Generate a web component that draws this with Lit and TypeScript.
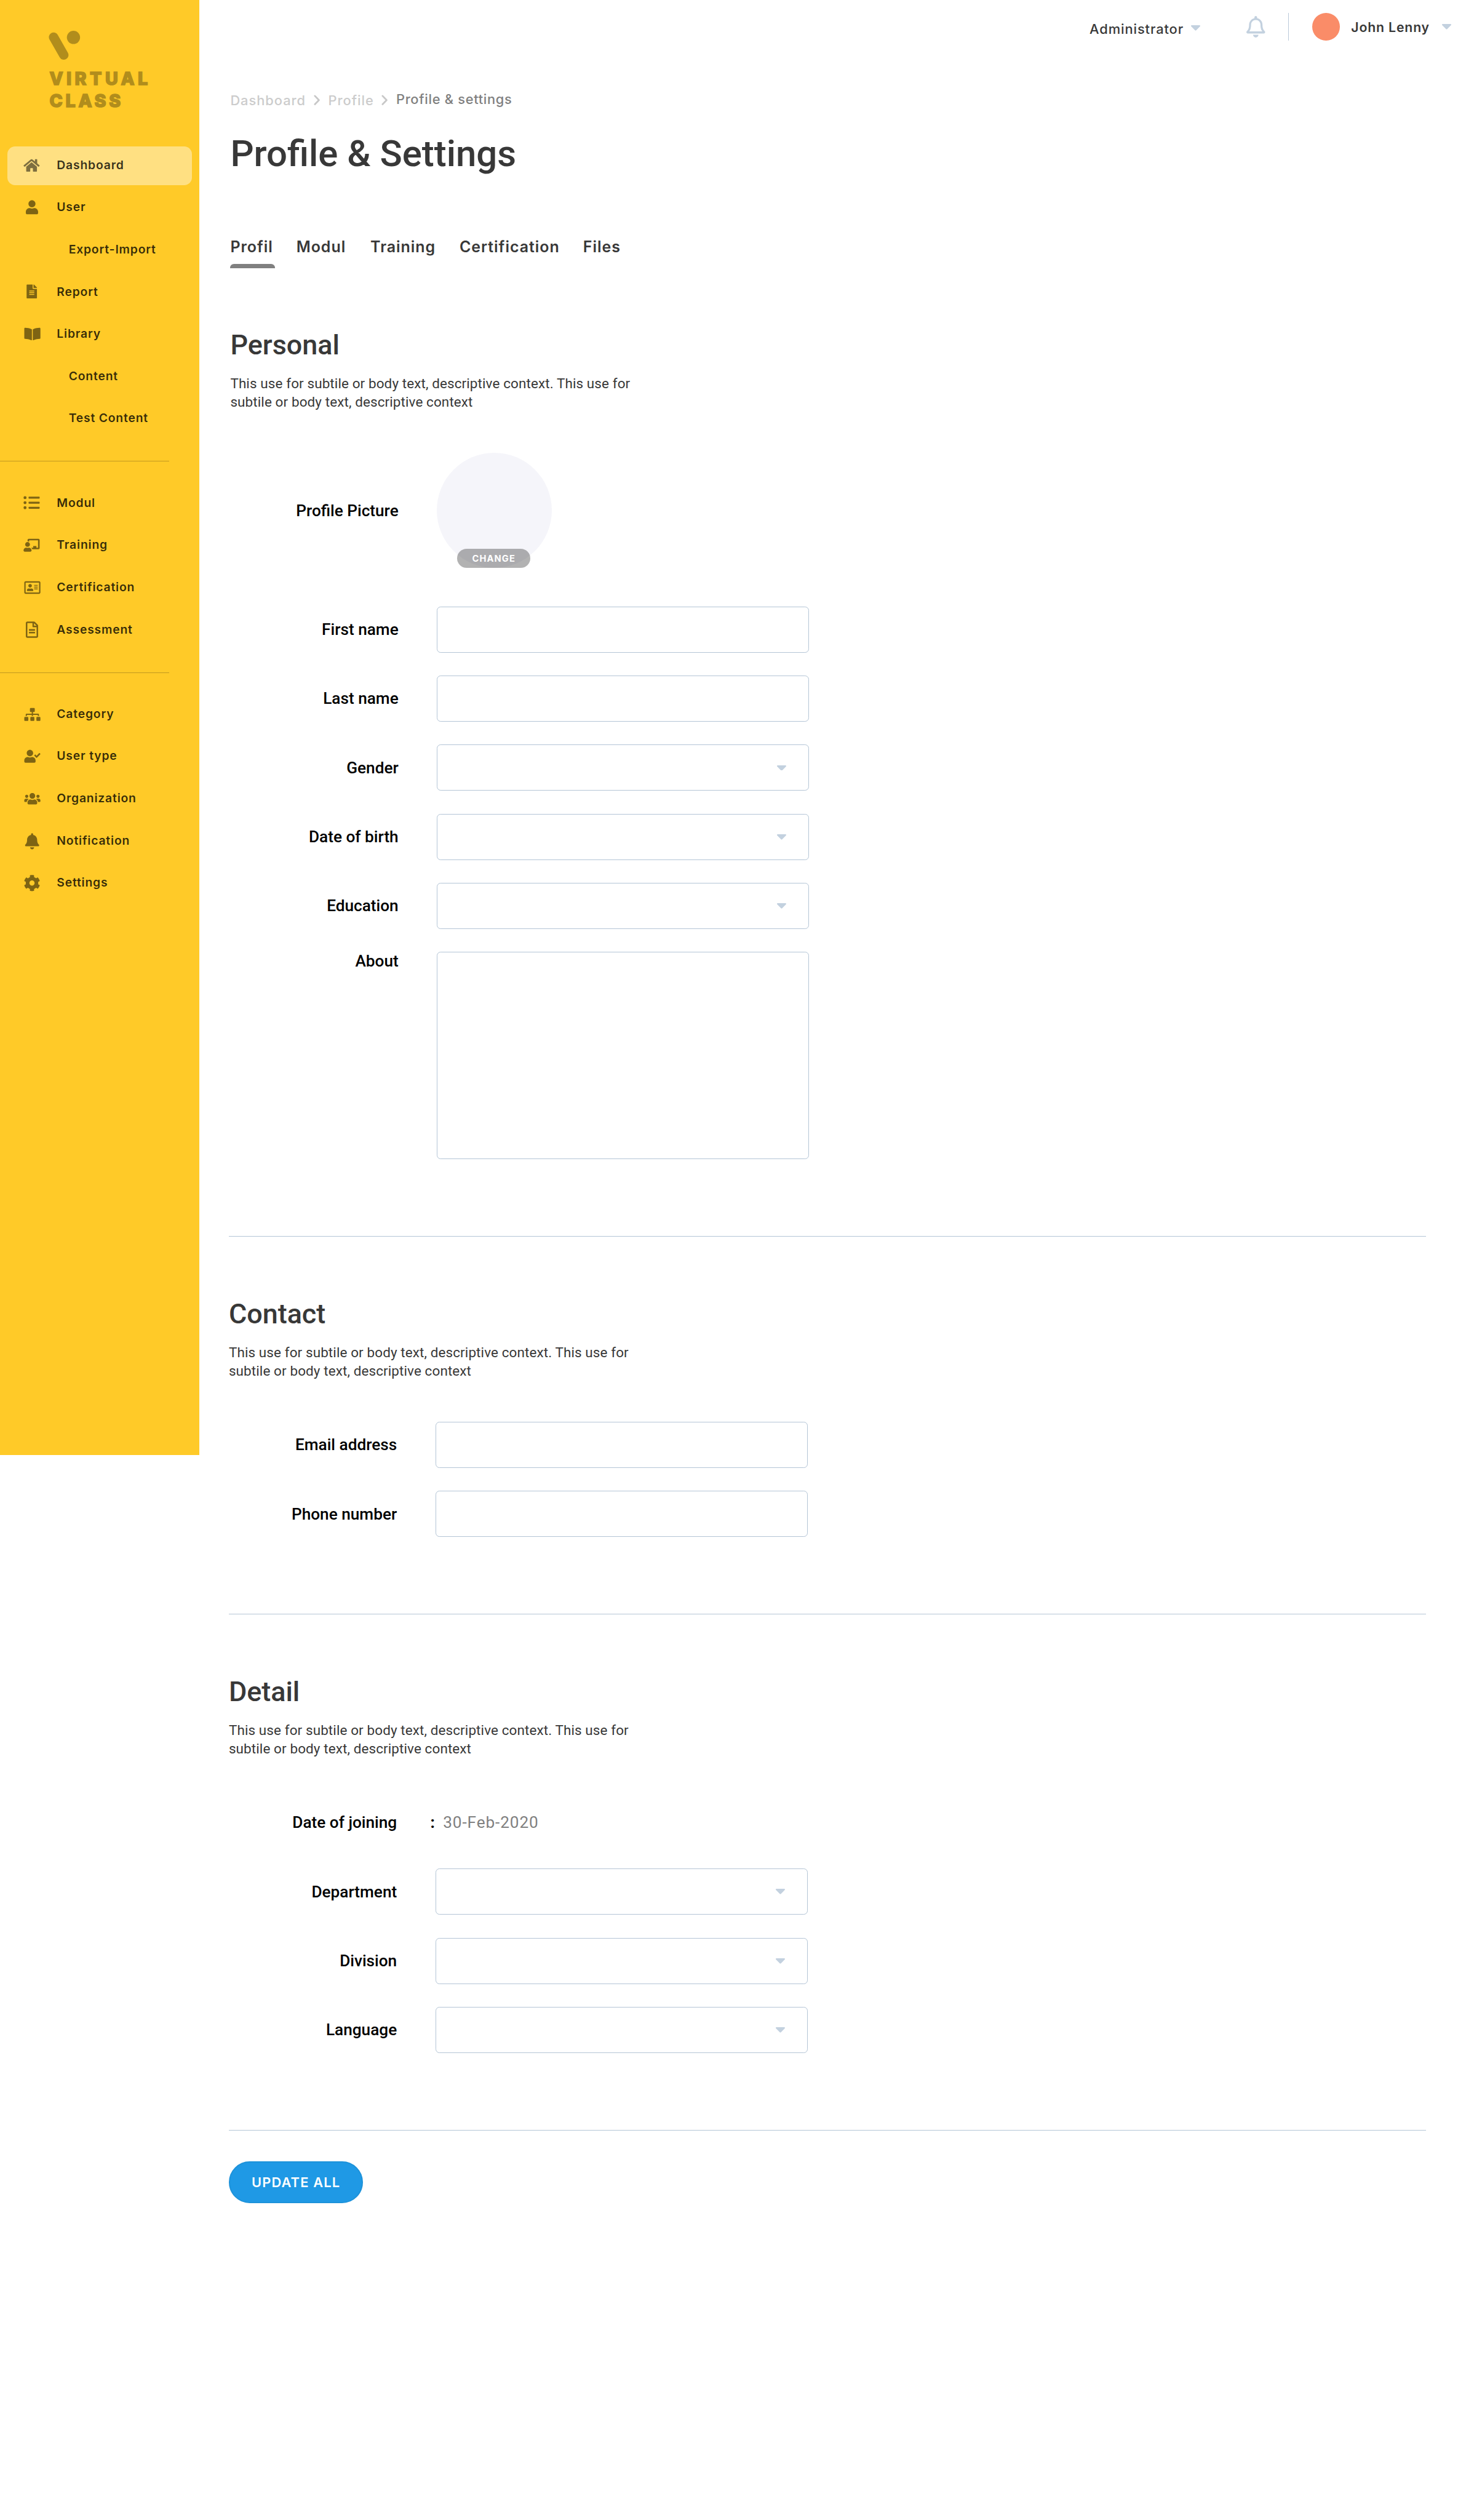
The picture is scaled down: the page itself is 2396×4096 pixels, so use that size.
import { LitElement, html, css, svg, unsafeCSS, nothing } from "lit";
import { customElement, property } from "lit/decorators.js";
import { classMap } from "lit/directives/class-map.js";

/** Converts a design-grid length (3840 units wide) to CSS pixels. */
const SCALE = 0.624;
const u = (n: number) => unsafeCSS(`${+(n * SCALE).toFixed(3)}px`);

interface Glyph {
  /** Source grid the path was drawn on. */
  scale: number;
  /** Offset inside the 48x48 icon slot. */
  x: number;
  y: number;
  d: string;
}

const ICONS: Record<string, Glyph> = {
  home: { scale: 42 / 576, x: 2, y: 3.6, d: "M280.37 148.26L96 300.11V464a16 16 0 0 0 16 16l112.06-.29a16 16 0 0 0 15.92-16V368a16 16 0 0 1 16-16h64a16 16 0 0 1 16 16v95.64a16 16 0 0 0 16 16.05L464 480a16 16 0 0 0 16-16V300L295.67 148.26a12.19 12.19 0 0 0-15.3 0zM571.6 251.47L488 182.56V44.05a12 12 0 0 0-12-12h-56a12 12 0 0 0-12 12v72.61L318.47 43a48 48 0 0 0-61 0L4.34 251.47a12 12 0 0 0-1.6 16.9l25.5 31A12 12 0 0 0 45.15 301l235.22-193.74a12.19 12.19 0 0 1 15.3 0L530.9 301a12 12 0 0 0 16.9-1.6l25.5-31a12 12 0 0 0-1.7-16.93z" },
  user: { scale: 32 / 448, x: 8, y: 4, d: "M224 256c70.7 0 128-57.3 128-128S294.7 0 224 0 96 57.3 96 128s57.3 128 128 128zm89.6 32h-16.7c-22.2 10.2-46.9 16-72.9 16s-50.6-5.8-72.9-16h-16.7C60.2 288 0 348.2 0 422.4V464c0 26.5 21.5 48 48 48h352c26.5 0 48-21.5 48-48v-41.6c0-74.2-60.2-134.4-134.4-134.4z" },
  report: { scale: 27 / 384, x: 10, y: 4, d: "M224 136V0H24C10.7 0 0 10.7 0 24v464c0 13.3 10.7 24 24 24h336c13.3 0 24-10.7 24-24V160H248c-13.2 0-24-10.8-24-24zm64 236c0 6.6-5.4 12-12 12H108c-6.6 0-12-5.4-12-12v-8c0-6.6 5.4-12 12-12h168c6.6 0 12 5.4 12 12v8zm0-64c0 6.6-5.4 12-12 12H108c-6.6 0-12-5.4-12-12v-8c0-6.6 5.4-12 12-12h168c6.6 0 12 5.4 12 12v8zm0-72v8c0 6.6-5.4 12-12 12H108c-6.6 0-12-5.4-12-12v-8c0-6.6 5.4-12 12-12h168c6.6 0 12 5.4 12 12zm96-114.1v6.1H256V0h6.1c6.4 0 12.5 2.5 17 7l97.9 98c4.5 4.5 7 10.6 7 16.9z" },
  library: { scale: 42 / 576, x: 4, y: 3.6, d: "M542.22 32.05c-54.8 3.11-163.72 14.43-230.96 55.59-4.64 2.84-7.27 7.89-7.27 13.17v363.87c0 11.55 12.63 18.85 23.28 13.49 69.18-34.82 169.23-44.32 218.7-46.92 16.89-.89 30.02-14.43 30.02-30.66V62.75c.01-17.71-15.35-31.74-33.77-30.7zM264.73 87.64C197.5 46.48 88.58 35.17 33.78 32.05 15.36 31.01 0 45.04 0 62.75V400.6c0 16.24 13.13 29.78 30.02 30.66 49.49 2.6 149.59 12.11 218.77 46.95 10.62 5.35 23.21-1.94 23.21-13.46V100.63c0-5.29-2.62-10.14-7.27-12.99z" },
  list: { scale: 42 / 512, x: 2, y: 0, d: "M48 48a48 48 0 1 0 48 48 48 48 0 0 0-48-48zm0 160a48 48 0 1 0 48 48 48 48 0 0 0-48-48zm0 160a48 48 0 1 0 48 48 48 48 0 0 0-48-48zm448 16H176a16 16 0 0 0-16 16v32a16 16 0 0 0 16 16h320a16 16 0 0 0 16-16v-32a16 16 0 0 0-16-16zm0-320H176a16 16 0 0 0-16 16v32a16 16 0 0 0 16 16h320a16 16 0 0 0 16-16V80a16 16 0 0 0-16-16zm0 160H176a16 16 0 0 0-16 16v32a16 16 0 0 0 16 16h320a16 16 0 0 0 16-16v-32a16 16 0 0 0-16-16z" },
  training: { scale: 42 / 640, x: 2, y: 6, d: "M208 352c-2.39 0-4.78.35-7.06 1.09C187.98 357.3 174.35 360 160 360c-14.35 0-27.98-2.7-40.95-6.91-2.28-.74-4.66-1.09-7.05-1.09C49.94 352-.33 402.48 0 464.62.14 490.88 21.73 512 48 512h224c26.27 0 47.86-21.12 48-47.38.33-62.14-49.94-112.62-112-112.62zm-48-32c53.02 0 96-42.98 96-96s-42.98-96-96-96-96 42.98-96 96 42.98 96 96 96zM592 0H208c-26.47 0-48 22.25-48 49.59V96c23.42 0 45.1 6.78 64 17.8V64h352v288h-64v-64H384v64h-76.24c19.1 16.69 33.12 38.73 39.69 64H592c26.47 0 48-22.25 48-49.59V49.59C640 22.25 618.47 0 592 0z" },
  card: { scale: 42 / 576, x: 4, y: 3.8, d: "M528 32H48C21.5 32 0 53.5 0 80v352c0 26.5 21.5 48 48 48h480c26.5 0 48-21.5 48-48V80c0-26.5-21.5-48-48-48zm0 400H48V80h480v352zM208 256c35.3 0 64-28.7 64-64s-28.7-64-64-64-64 28.7-64 64 28.7 64 64 64zm-89.6 128h179.2c12.4 0 22.4-8.6 22.4-19.2v-19.2c0-31.8-30.1-57.6-67.2-57.6-10.8 0-18.7 8-44.8 8-26.9 0-33.4-8-44.8-8-37.1 0-67.2 25.8-67.2 57.6v19.2c0 10.6 10 19.2 22.4 19.2zM360 320h112c4.4 0 8-3.6 8-8v-16c0-4.4-3.6-8-8-8H360c-4.4 0-8 3.6-8 8v16c0 4.4 3.6 8 8 8zm0-64h112c4.4 0 8-3.6 8-8v-16c0-4.4-3.6-8-8-8H360c-4.4 0-8 3.6-8 8v16c0 4.4 3.6 8 8 8zm0-64h112c4.4 0 8-3.6 8-8v-16c0-4.4-3.6-8-8-8H360c-4.4 0-8 3.6-8 8v16c0 4.4 3.6 8 8 8z" },
  assessment: { scale: 32 / 384, x: 8, y: 2, d: "M288 248v28c0 6.6-5.4 12-12 12H108c-6.6 0-12-5.4-12-12v-28c0-6.6 5.4-12 12-12h168c6.6 0 12 5.4 12 12zm-12 72H108c-6.6 0-12 5.4-12 12v28c0 6.6 5.4 12 12 12h168c6.6 0 12-5.4 12-12v-28c0-6.6-5.4-12-12-12zm108-188.1V464c0 26.5-21.5 48-48 48H48c-26.5 0-48-21.5-48-48V48C0 21.5 21.5 0 48 0h204.1C264.8 0 277 5.1 286 14.1L369.9 98c9 8.9 14.1 21.2 14.1 33.9zm-128-80V128h76.1L256 51.9zM336 464V176H232c-13.3 0-24-10.7-24-24V48H48v416h288z" },
  sitemap: { scale: 42 / 640, x: 4, y: 6, d: "M128 352H32c-17.67 0-32 14.33-32 32v96c0 17.67 14.33 32 32 32h96c17.67 0 32-14.33 32-32v-96c0-17.67-14.33-32-32-32zm-24-80h192v48h48v-48h192v48h48v-57.59c0-21.17-17.23-38.41-38.41-38.41H344v-64h40c17.67 0 32-14.33 32-32V32c0-17.67-14.33-32-32-32H256c-17.67 0-32 14.33-32 32v96c0 17.67 14.33 32 32 32h40v64H94.41C73.23 224 56 241.23 56 262.41V320h48v-48zm264 80h-96c-17.67 0-32 14.33-32 32v96c0 17.67 14.33 32 32 32h96c17.67 0 32-14.33 32-32v-96c0-17.67-14.33-32-32-32zm240 0h-96c-17.67 0-32 14.33-32 32v96c0 17.67 14.33 32 32 32h96c17.67 0 32-14.33 32-32v-96c0-17.67-14.33-32-32-32z" },
  usercheck: { scale: 42 / 640, x: 4, y: 6, d: "M224 256c70.7 0 128-57.3 128-128S294.7 0 224 0 96 57.3 96 128s57.3 128 128 128zm89.6 32h-16.7c-22.2 10.2-46.9 16-72.9 16s-50.6-5.8-72.9-16h-16.7C60.2 288 0 348.2 0 422.4V464c0 26.5 21.5 48 48 48h352c26.5 0 48-21.5 48-48v-41.6c0-74.2-60.2-134.4-134.4-134.4zm323-128.4l-27.8-28.1c-4.6-4.7-12.1-4.7-16.8-.1l-104.8 104-45.5-45.8c-4.6-4.7-12.1-4.7-16.8-.1l-28.1 27.9c-4.7 4.6-4.7 12.1-.1 16.8l81.7 82.3c4.6 4.7 12.1 4.7 16.8.1l141.3-140.2c4.6-4.7 4.7-12.2.1-16.8z" },
  users: { scale: 42 / 640, x: 4, y: 6, d: "M96 224c35.3 0 64-28.7 64-64s-28.7-64-64-64-64 28.7-64 64 28.7 64 64 64zm448 0c35.3 0 64-28.7 64-64s-28.7-64-64-64-64 28.7-64 64 28.7 64 64 64zm32 32h-64c-17.6 0-33.5 7.1-45.1 18.6 40.3 22.1 68.9 62 75.1 109.4h66c17.7 0 32-14.3 32-32v-32c0-35.3-28.7-64-64-64zm-256 0c61.9 0 112-50.1 112-112S381.9 32 320 32 208 82.1 208 144s50.1 112 112 112zm76.8 32h-8.3c-20.8 10-43.9 16-68.5 16s-47.6-6-68.5-16h-8.3C179.6 288 128 339.6 128 403.2V432c0 26.5 21.5 48 48 48h288c26.5 0 48-21.5 48-48v-28.8c0-63.6-51.6-115.2-115.2-115.2zm-223.7-13.4C161.5 263.1 145.6 256 128 256H64c-35.3 0-64 28.7-64 64v32c0 17.7 14.3 32 32 32h65.9c6.3-47.4 34.9-87.3 75.2-109.4z" },
  bell: { scale: 42 / 512, x: 6, y: 2, d: "M224 512c35.32 0 63.97-28.65 63.97-64H160.03c0 35.35 28.65 64 63.97 64zm215.39-149.71c-19.32-20.76-55.47-51.99-55.47-154.29 0-77.7-54.48-139.9-127.94-155.16V32c0-17.67-14.32-32-31.98-32s-31.98 14.33-31.98 32v20.84C118.56 68.1 64.08 130.3 64.08 208c0 102.3-36.15 133.53-55.47 154.29-6 6.45-8.66 14.16-8.61 21.71.11 16.4 12.98 32 32.1 32h383.8c19.12 0 32-15.6 32.1-32 .05-7.55-2.61-15.27-8.61-21.71z" },
  cog: { scale: 42 / 496, x: 2.4, y: 1.3, d: "M487.4 315.7l-42.6-24.6c4.3-23.2 4.3-47 0-70.2l42.6-24.6c4.9-2.8 7.1-8.6 5.5-14-11.1-35.6-30-67.8-54.7-94.6-3.8-4.1-10-5.1-14.8-2.3L380.8 110c-17.9-15.4-38.5-27.3-60.8-35.1V25.8c0-5.6-3.9-10.5-9.4-11.7-36.7-8.2-74.3-7.8-109.2 0-5.5 1.2-9.4 6.1-9.4 11.7V75c-22.2 7.9-42.8 19.8-60.8 35.1L88.7 85.5c-4.9-2.8-11-1.9-14.8 2.3-24.7 26.7-43.6 58.9-54.7 94.6-1.7 5.4.6 11.2 5.5 14L67.3 221c-4.3 23.2-4.3 47 0 70.2l-42.6 24.6c-4.9 2.8-7.1 8.6-5.5 14 11.1 35.6 30 67.8 54.7 94.6 3.8 4.1 10 5.1 14.8 2.3l42.6-24.6c17.9 15.4 38.5 27.3 60.8 35.1v49.2c0 5.6 3.9 10.5 9.4 11.7 36.7 8.2 74.3 7.8 109.2 0 5.5-1.2 9.4-6.1 9.4-11.7v-49.2c22.2-7.9 42.8-19.8 60.8-35.1l42.6 24.6c4.9 2.8 11 1.9 14.8-2.3 24.7-26.7 43.6-58.9 54.7-94.6 1.5-5.5-.7-11.3-5.6-14.1zM256 336c-44.1 0-80-35.9-80-80s35.9-80 80-80 80 35.9 80 80-35.9 80-80 80z" },
};

const BELL_OUTLINE =
  "M439.39 362.29c-19.32-20.76-55.47-51.99-55.47-154.29 0-77.7-54.48-139.9-127.94-155.16V32c0-17.67-14.32-32-31.98-32s-31.98 14.33-31.98 32v20.84C118.56 68.1 64.08 130.3 64.08 208c0 102.3-36.15 133.53-55.47 154.29-6 6.45-8.66 14.16-8.61 21.71.11 16.4 12.98 32 32.1 32h383.8c19.12 0 32-15.6 32.1-32 .05-7.55-2.61-15.26-8.61-21.71zM67.53 368c21.22-27.97 44.42-74.33 44.53-159.42 0-.2-.06-.38-.06-.58 0-61.86 50.14-112 112-112s112 50.14 112 112c0 .2-.06.38-.06.58.11 85.1 23.31 131.46 44.53 159.42H67.53zM224 512c35.32 0 63.97-28.65 63.97-64H160.03c0 35.35 28.65 64 63.97 64z";

const caret = html`<svg class="caret" viewBox="0 0 24 14" aria-hidden="true">
  <path d="M2 0h20c1.8 0 2.6 2 1.4 3.3l-9.9 10c-.8.9-2.200.9-3 0L.6 3.300C-.6 2 .2 0 2 0z" />
</svg>`;

const caretStyles = css`
  .caret {
    display: block;
    flex: none;
    width: ${u(24)};
    height: ${u(14)};
    fill: #c3d1df;
  }
`;

interface NavEntry {
  label?: string;
  icon?: string;
  active?: boolean;
}

const NAV: NavEntry[] = [
  { label: "Dashboard", icon: "home", active: true },
  { label: "User", icon: "user" },
  { label: "Export-Import" },
  { label: "Report", icon: "report" },
  { label: "Library", icon: "library" },
  { label: "Content" },
  { label: "Test Content" },
  {},
  { label: "Modul", icon: "list" },
  { label: "Training", icon: "training" },
  { label: "Certification", icon: "card" },
  { label: "Assessment", icon: "assessment" },
  {},
  { label: "Category", icon: "sitemap" },
  { label: "User type", icon: "usercheck" },
  { label: "Organization", icon: "users" },
  { label: "Notification", icon: "bell" },
  { label: "Settings", icon: "cog" },
];

@customElement("side-nav")
class SideNav extends LitElement {
  static styles = css`
    :host {
      display: block;
      box-sizing: border-box;
      height: ${u(3790)};
      padding-top: ${u(78)};
      background: #ffca28;
      font-family: Inter, "Liberation Sans", sans-serif;
    }
    .mark {
      display: block;
      width: ${u(90)};
      height: ${u(82)};
      margin-left: ${u(124)};
      fill: #b18d1c;
      stroke: #b18d1c;
    }
    .wordmark {
      margin: ${u(16)} 0 ${u(85)} ${u(129)};
      font-size: ${u(46)};
      line-height: ${u(58)};
      font-weight: 800;
      letter-spacing: ${u(8.7)};
      color: #b18d1c;
      -webkit-text-stroke: ${u(2.6)} #b18d1c;
      stroke-linejoin: round;
    }
    .second {
      letter-spacing: ${u(7.5)};
    }
    .row {
      display: flex;
      align-items: center;
      box-sizing: border-box;
      height: ${u(100)};
      margin: 0 ${u(20)} ${u(10)};
      padding-left: ${u(40)};
      border-radius: ${u(20)};
    }
    .nav {
      padding-top: ${u(5)};
    }
    .active {
      background: #ffe082;
    }
    .icon {
      flex: none;
      width: ${u(48)};
      height: ${u(48)};
      fill: #000;
      opacity: 0.5;
    }
    .label {
      margin-left: ${u(40)};
      padding-bottom: ${u(6)};
      font-size: ${u(31)};
      font-weight: 600;
      letter-spacing: 0.042em;
      white-space: nowrap;
      color: rgba(0, 0, 0, 0.78);
    }
    .sub {
      margin-left: ${u(119)};
    }
    .gap {
      display: flex;
      align-items: center;
      height: ${u(110)};
      margin-top: ${u(-5)};
      margin-bottom: ${u(5)};
    }
    .line {
      width: ${u(440)};
      height: 1px;
      background: rgba(0, 0, 0, 0.24);
    }
  `;

  private renderIcon(name: string) {
    const g = ICONS[name];
    return html`<svg class="icon" viewBox="0 0 48 48" aria-hidden="true">
      ${svg`<path transform="translate(${g.x} ${g.y}) scale(${g.scale})" d=${g.d} />`}
    </svg>`;
  }

  render() {
    return html`
      <svg class="mark" viewBox="124 78 90 82" aria-hidden="true">
        <path d="M140.200 96.200L166.800 142.800" stroke-width="24.500" stroke-linecap="round" />
        <circle cx="192" cy="97" r="17.200" stroke="none" />
      </svg>
      <div class="wordmark">VIRTUAL<br /><span class="second">CLASS</span></div>
      <nav class="nav">
        ${NAV.map((n) =>
          n.label
            ? html`<div class=${classMap({ row: true, active: !!n.active })}>
                ${n.icon ? this.renderIcon(n.icon) : nothing}
                <span class=${classMap({ label: true, sub: !n.icon })}>${n.label}</span>
              </div>`
            : html`<div class="gap"><div class="line"></div></div>`
        )}
      </nav>
    `;
  }
}

@customElement("top-bar")
class TopBar extends LitElement {
  static styles = [
    caretStyles,
    css`
      :host {
        display: flex;
        align-items: center;
        justify-content: flex-end;
        height: ${u(140)};
        padding-right: ${u(60)};
        font-family: Inter, "Liberation Sans", sans-serif;
        font-size: ${u(34)};
        color: #383838;
        white-space: nowrap;
      }
      .group {
        display: flex;
        align-items: center;
      }
      .role {
        padding-top: ${u(7)};
      }
      .role-name {
        width: ${u(265)};
        padding-top: ${u(4)};
        font-size: ${u(35)};
        font-weight: 500;
        letter-spacing: 0.042em;
      }
      .bell {
        width: ${u(49)};
        height: ${u(56)};
        margin-left: ${u(120)};
        fill: #c3d1df;
      }
      .rule {
        width: 1px;
        height: ${u(72)};
        margin: 0 ${u(60)};
        background: #bac9d9;
      }
      .avatar {
        width: ${u(72)};
        height: ${u(72)};
        border-radius: 50%;
        background: #fa8c68;
      }
      .name {
        width: ${u(236)};
        margin-left: ${u(30)};
        font-weight: 600;
        letter-spacing: 0.04em;
      }
    `,
  ];

  render() {
    return html`
      <div class="group role"><span class="role-name">Administrator</span>${caret}</div>
      <svg class="bell" viewBox="0 0 448 512" preserveAspectRatio="none" aria-hidden="true">
        <path d=${BELL_OUTLINE} />
      </svg>
      <div class="rule"></div>
      <div class="avatar"></div>
      <div class="group"><span class="name">John Lenny</span>${caret}</div>
    `;
  }
}

type FieldKind = "input" | "select" | "area" | "picture" | "text";

@customElement("form-row")
class FormRow extends LitElement {
  @property() label = "";
  @property() kind: FieldKind = "input";
  @property() value = "";

  static styles = [
    caretStyles,
    css`
      :host {
        display: grid;
        grid-template-columns: ${u(438)} ${u(970)};
        column-gap: ${u(100)};
        align-items: center;
        font-family: Roboto, sans-serif;
        font-size: ${u(42)};
        line-height: ${u(49)};
      }
      .label {
        text-align: right;
        font-weight: 500;
        color: #000;
      }
      .top {
        align-self: start;
      }
      .box {
        display: flex;
        align-items: center;
        justify-content: flex-end;
        box-sizing: border-box;
        height: ${u(120)};
        padding-right: ${u(58)};
        border: 1px solid #b4c5d6;
        border-radius: ${u(10)};
        background: #fff;
      }
      .area {
        height: ${u(540)};
      }
      .picture {
        display: flex;
        flex-direction: column;
        justify-content: flex-end;
        align-items: center;
        width: ${u(300)};
        height: ${u(300)};
        border-radius: 50%;
        background: #f5f5fa;
      }
      .change {
        display: flex;
        align-items: center;
        justify-content: center;
        width: ${u(192)};
        height: ${u(50)};
        margin-right: ${u(4)};
        border-radius: ${u(25)};
        background: rgba(0, 0, 0, 0.3);
        color: #fff;
        font-family: Inter, "Liberation Sans", sans-serif;
        font-size: ${u(23.5)};
        font-weight: 700;
        letter-spacing: 0.075em;
        text-indent: 0.05em;
      }
      .value {
        display: flex;
        gap: ${u(20)};
        height: ${u(120)};
        margin-left: ${u(-13)};
        align-items: center;
        color: #808080;
        letter-spacing: 0.034em;
      }
      .colon {
        font-weight: 700;
        color: #000;
      }
    `,
  ];

  private renderControl() {
    switch (this.kind) {
      case "picture":
        return html`<div class="picture"><div class="change">CHANGE</div></div>`;
      case "text":
        return html`<div class="value"><span class="colon">:</span><span>${this.value}</span></div>`;
      case "area":
        return html`<div class="box area"></div>`;
      case "select":
        return html`<div class="box">${caret}</div>`;
      default:
        return html`<div class="box"></div>`;
    }
  }

  render() {
    return html`
      <div class=${classMap({ label: true, top: this.kind === "area" })}>${this.label}</div>
      ${this.renderControl()}
    `;
  }
}

interface Field {
  label: string;
  kind: FieldKind;
  value?: string;
}

const SECTIONS: { title: string; fields: Field[] }[] = [
  {
    title: "Personal",
    fields: [
      { label: "Profile Picture", kind: "picture" },
      { label: "First name", kind: "input" },
      { label: "Last name", kind: "input" },
      { label: "Gender", kind: "select" },
      { label: "Date of birth", kind: "select" },
      { label: "Education", kind: "select" },
      { label: "About", kind: "area" },
    ],
  },
  {
    title: "Contact",
    fields: [
      { label: "Email address", kind: "input" },
      { label: "Phone number", kind: "input" },
    ],
  },
  {
    title: "Detail",
    fields: [
      { label: "Date of joining", kind: "text", value: "30-Feb-2020" },
      { label: "Department", kind: "select" },
      { label: "Division", kind: "select" },
      { label: "Language", kind: "select" },
    ],
  },
];

const TABS = ["Profil", "Modul", "Training", "Certification", "Files"];

@customElement("app-root")
class AppRoot extends LitElement {
  static styles = css`
    :host {
      display: grid;
      grid-template-columns: ${u(520)} 1fr;
      align-items: start;
      width: 2396px;
      height: 4096px;
      overflow: hidden;
      background: #fff;
      color: #383838;
      font-family: Roboto, sans-serif;
    }
    .crumbs {
      display: grid;
      grid-template-columns: ${u(218)} ${u(37)} ${u(139)} ${u(38)} auto;
      align-items: center;
      height: ${u(40)};
      margin: ${u(100)} 0 0 ${u(80)};
      font-family: Inter, "Liberation Sans", sans-serif;
      font-size: ${u(35)};
      line-height: ${u(40)};
      font-weight: 500;
      letter-spacing: 0.045em;
      white-space: nowrap;
      color: #ccc;
    }
    .crumb {
      padding-top: ${u(2)};
    }
    .current {
      margin-top: ${u(-3)};
      letter-spacing: 0.032em;
      color: #808080;
    }
    .chevron {
      display: block;
      width: ${u(18)};
      height: ${u(28)};
      fill: none;
      stroke: #c8c8c8;
      stroke-width: 4.500;
      stroke-linecap: round;
      stroke-linejoin: round;
    }
    .title {
      margin: ${u(65)} 0 0 ${u(80)};
      font-size: ${u(96)};
      line-height: ${u(112)};
      font-weight: 500;
    }
    .tabs {
      display: grid;
      grid-template-columns: ${u(172)} ${u(193)} ${u(232)} ${u(322)} auto;
      margin: ${u(164)} 0 0 ${u(80)};
      font-family: Inter, "Liberation Sans", sans-serif;
      font-size: ${u(40)};
      line-height: ${u(48)};
      font-weight: 600;
      letter-spacing: 0.039em;
      white-space: nowrap;
    }
    .tab {
      height: ${u(77)};
    }
    .bar {
      width: ${u(116)};
      height: ${u(10)};
      margin-top: ${u(19)};
      border-radius: ${u(10)} ${u(10)} 0 0;
      background: #808080;
    }
    .section {
      margin-left: ${u(76)};
    }
    .first {
      margin-left: ${u(80)};
    }
    .heading {
      margin: 0;
      padding-top: ${u(159)};
      font-size: ${u(72)};
      line-height: ${u(84)};
      font-weight: 500;
    }
    .desc {
      margin: ${u(35)} 0 ${u(108)};
      font-size: ${u(36)};
      line-height: ${u(48)};
      letter-spacing: 0.005em;
      white-space: nowrap;
    }
    .fields {
      display: flex;
      flex-direction: column;
      gap: ${u(60)};
    }
    .tall {
      margin-bottom: ${u(40)};
    }
    .divider {
      width: ${u(3118)};
      height: ${u(2)};
      margin: ${u(200)} 0 0 ${u(76)};
      background: #b4c5d6;
    }
    .submit {
      display: flex;
      align-items: center;
      justify-content: center;
      box-sizing: border-box;
      width: ${u(350)};
      height: ${u(110)};
      margin: ${u(80)} 0 0 ${u(76)};
      border: ${u(4)} solid #1d92da;
      border-radius: ${u(55)};
      background: #1f99e5;
      color: #fff;
      font-family: Inter, "Liberation Sans", sans-serif;
      font-size: ${u(35)};
      font-weight: 600;
      letter-spacing: 0.052em;
    }
  `;

  render() {
    const chevron = html`<svg class="chevron" viewBox="0 0 18 28" aria-hidden="true">
      <path d="M3 3l10.500 11L3 25" />
    </svg>`;
    return html`
      <side-nav></side-nav>
      <main>
        <top-bar></top-bar>
        <div class="crumbs">
          <span class="crumb">Dashboard</span>${chevron}
          <span class="crumb">Profile</span>${chevron}
          <span class="current">Profile &amp; settings</span>
        </div>
        <div class="title">Profile &amp; Settings</div>
        <div class="tabs">
          ${TABS.map(
            (t, i) => html`<div class="tab">${t}${i === 0 ? html`<div class="bar"></div>` : nothing}</div>`
          )}
        </div>
        ${SECTIONS.map(
          (s, i) => html`
            <section class=${classMap({ section: true, first: i === 0 })}>
              <div class="heading">${s.title}</div>
              <div class="desc">
                This use for subtile or body text, descriptive context. This use for<br />subtile or body text,
                descriptive context
              </div>
              <div class="fields">
                ${s.fields.map(
                  (f) => html`<form-row
                    class=${classMap({ tall: f.kind === "picture" })}
                    .label=${f.label}
                    .kind=${f.kind}
                    .value=${f.value ?? ""}
                  ></form-row>`
                )}
              </div>
            </section>
            <div class="divider"></div>
          `
        )}
        <div class="submit">UPDATE ALL</div>
      </main>
    `;
  }
}
